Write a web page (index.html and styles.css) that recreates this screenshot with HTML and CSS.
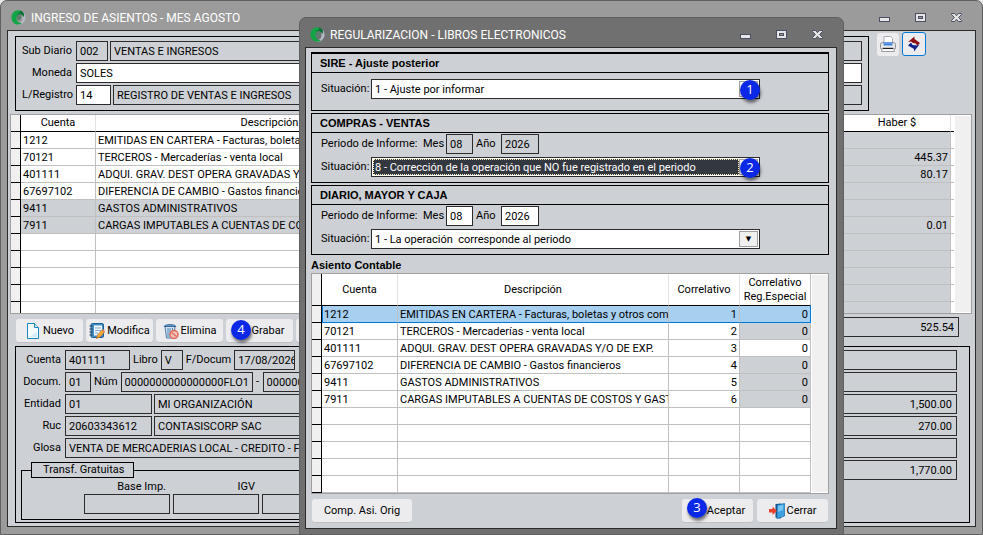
FILE: index.html
```html
<!DOCTYPE html>
<html lang="es">
<head>
  <meta charset="UTF-8" />
  <meta name="viewport" content="width=device-width, initial-scale=1.0" />
  <title>Ingreso de Asientos</title>
  <link rel="stylesheet" href="styles.css">
</head>
<body>
  <svg class="sprite" aria-hidden="true">
    <symbol id="logo" viewBox="0 0 16 16">
      <path d="M14 3.500A8 8 0 0 1 12.500 14.500C10 16.500 7 15.500 6 14C9.500 14.500 13 12 12 7.500Z" fill="#b4b8c4" />
      <path d="M9.500 0.500C4 -0.500 0.500 3.500 0.500 8C0.500 12.500 4 16 8.500 15.500C10 15.300 11 14.500 11.500 14C8 14 5.500 11.500 6 8C6.300 5.500 8.500 4 10.500 4.500C12 4.900 13 6 13.500 7.500C14.500 4.500 13 1.300 9.500 0.500Z" fill="#12a546" />
      <path d="M9.500 0.500C13 1.300 14.500 4.500 13.500 7.500C13 6 12 4.900 10.500 4.500C8.500 4 7 5 6.300 6.500C6.500 4.500 8 3 10 3Z" fill="#0b6b35" />
      <path d="M6.300 6.500C7 5 8.500 4.200 10.500 4.500C11.500 6.500 11.500 9.500 8.500 11.500C6.500 11 5.800 8.500 6.300 6.500Z" fill="#5d7d6c" />
    </symbol>
    <symbol id="minimize" viewBox="0 0 12 12">
      <rect x="0.500" y="5.500" width="10" height="4" fill="#e6e6e6" stroke="#4b4f66" />
    </symbol>
    <symbol id="maximize" viewBox="0 0 12 12">
      <rect x="0.500" y="1.500" width="10" height="8" fill="#e6e6e6" stroke="#4b4f66" />
      <rect x="3.500" y="4.500" width="4" height="2" fill="#9a9a9a" stroke="#4b4f66" />
    </symbol>
    <symbol id="close" viewBox="0 0 12 12">
      <path d="M0.500 1.500H3.500L5.500 3.700L7.500 1.500H10.500V2.500L7.600 5.500L10.500 8.500V9.500H7.500L5.500 7.300L3.500 9.500H0.500V8.500L3.400 5.500L0.500 2.500Z" fill="#e6e6e6" stroke="#4b4f66" />
    </symbol>
  </svg>

  <main class="window">
    <header class="titlebar">
      <svg class="logo"><use href="#logo" /></svg>
      <h1 class="title">INGRESO DE ASIENTOS - MES AGOSTO</h1>
      <button class="win-button" aria-label="Minimizar"><svg><use href="#minimize" /></svg></button>
      <button class="win-button" aria-label="Maximizar"><svg><use href="#maximize" /></svg></button>
      <button class="win-button" aria-label="Cerrar ventana"><svg><use href="#close" /></svg></button>
    </header>

    <div class="client entry">
      <div class="entry-top">
        <section class="box diary">
          <div class="field-row">
            <label class="label" for="subDiario">Sub Diario</label>
            <input class="field w-32" id="subDiario" value="002" readonly>
            <input class="field grow" value="VENTAS E INGRESOS" aria-label="Nombre del sub diario" readonly>
          </div>
          <div class="field-row">
            <label class="label" for="moneda">Moneda</label>
            <input class="field grow editable" id="moneda" value="SOLES">
          </div>
          <div class="field-row">
            <label class="label" for="registro">L/Registro</label>
            <input class="field w-35 editable" id="registro" value="14">
            <input class="field grow" value="REGISTRO DE VENTAS E INGRESOS" aria-label="Nombre del registro" readonly>
          </div>
        </section>
        <div class="tools">
          <button class="tool" aria-label="Imprimir">
            <svg viewBox="0 0 18 18">
              <path d="M5 8V1.500H11.500L13.500 3.500V8" fill="#fff" stroke="#aab" />
              <rect x="1.500" y="7.500" width="15" height="7" rx="2" fill="#e8e9eb" stroke="#8b8d92" />
              <path d="M4.500 7H13.500V10.500H4.500Z" fill="#3f7ed8" />
              <path d="M5 8H13" stroke="#8bb8f4" />
              <path d="M3.500 13H14.500L15.500 16.500H2.500Z" fill="#fafafa" stroke="#9a9ca0" />
              <path d="M4 13.500H14" stroke="#222" />
            </svg>
          </button>
          <button class="tool active" aria-label="Regularizar">
            <svg viewBox="0 0 18 18">
              <path d="M3 7L9.500 1.500V4L15 8L12 11L11 8.500L8 8L6 6.500Z" fill="#8c0d12" />
              <path d="M3 10.500L6 7.500L7.500 10L12 10.500L14.500 9.500L9 16.500V14Z" fill="#12208a" />
            </svg>
          </button>
        </div>
      </div>

      <div class="grid-frame entry-grid">
        <table class="grid">
          <colgroup>
            <col class="c-mark"><col class="c-account"><col class="c-wide"><col><col class="c-amount"><col class="c-rest">
          </colgroup>
          <thead>
            <tr><th class="mark"></th><th>Cuenta</th><th>Descripción</th><th></th><th>Haber $</th><th></th></tr>
          </thead>
          <tbody>
            <tr><td class="mark"></td><td>1212</td><td>EMITIDAS EN CARTERA - Facturas, boletas y otros comprobantes</td><td class="off"></td><td class="off num"></td><td></td></tr>
            <tr><td class="mark"></td><td>70121</td><td>TERCEROS - Mercaderías - venta local</td><td class="off"></td><td class="off num">445.37</td><td></td></tr>
            <tr><td class="mark"></td><td>401111</td><td>ADQUI. GRAV. DEST OPERA GRAVADAS Y/O DE EXP.</td><td class="off"></td><td class="off num">80.17</td><td></td></tr>
            <tr><td class="mark"></td><td>67697102</td><td>DIFERENCIA DE CAMBIO - Gastos financieros</td><td class="off"></td><td class="off num"></td><td></td></tr>
            <tr><td class="mark"></td><td class="off">9411</td><td class="off">GASTOS ADMINISTRATIVOS</td><td class="off"></td><td class="off num"></td><td></td></tr>
            <tr><td class="mark"></td><td class="off">7911</td><td class="off">CARGAS IMPUTABLES A CUENTAS DE COSTOS Y GASTOS</td><td class="off"></td><td class="off num">0.01</td><td></td></tr>
            <tr><td class="mark"></td><td></td><td></td><td class="off"></td><td class="off"></td><td></td></tr>
            <tr><td class="mark"></td><td></td><td></td><td class="off"></td><td class="off"></td><td></td></tr>
            <tr><td class="mark"></td><td></td><td></td><td class="off"></td><td class="off"></td><td></td></tr>
            <tr><td class="mark"></td><td></td><td></td><td class="off"></td><td class="off"></td><td></td></tr>
            <tr><td class="mark"></td><td></td><td></td><td class="off"></td><td class="off"></td><td></td></tr>
          </tbody>
        </table>
        <div class="scroll"></div>
      </div>

      <div class="actions">
        <button class="button w-67">
          <svg viewBox="0 0 16 16">
            <path d="M2.500 0.500H9.500L13.500 4.500V15.500H2.500Z" fill="#f4fbff" stroke="#1e86c0" />
            <path d="M9.500 0.500V4.500H13.500" fill="#bfe3f8" stroke="#1e86c0" />
            <path d="M4 14H12V9Z" fill="#d6eefb" />
          </svg>
          Nuevo
        </button>
        <button class="button w-67">
          <svg viewBox="0 0 16 16">
            <rect x="2" y="0.500" width="12.500" height="14" rx="1.500" fill="#3f8fc9" stroke="#1f5f96" />
            <rect x="5" y="2.500" width="8" height="10" fill="#f2f8fd" />
            <path d="M6 5H12M6 7.500H12M6 10H9" stroke="#7aa7cf" />
            <path d="M0.500 3H4M0.500 6H4M0.500 9H4M0.500 12H4" stroke="#33465c" />
            <path d="M7.500 15.500L8.500 12L13 7L15.500 9L11 14Z" fill="#f5ac3c" stroke="#b8651b" stroke-width="0.700" />
            <path d="M13 7L14 6L16 8L15.500 9Z" fill="#e2867a" />
          </svg>
          Modifica
        </button>
        <button class="button w-67">
          <svg viewBox="0 0 16 16">
            <path d="M2 3.500H12L11 15H3.500Z" fill="#d4e2ef" stroke="#4f7ca7" />
            <path d="M5 5V14M7 5V14M9.500 5V10" stroke="#4f86ba" />
            <path d="M1 3.500C2 1 12 1 13 3.500Z" fill="#70a7d8" stroke="#36699b" />
            <circle cx="11" cy="11.500" r="4" fill="#f3c2bb" stroke="#dc6a5c" stroke-width="1.500" />
            <path d="M8.500 9.500L13.500 13.500" stroke="#dc6a5c" stroke-width="1.500" />
          </svg>
          Elimina
        </button>
        <button class="button w-67 save">Grabar<span class="badge on-save">4</span></button>
        <button class="button w-67" aria-label="Cancelar"></button>
        <input class="field num total" value="525.54" aria-label="Total haber" readonly>
      </div>

      <section class="box detail">
        <div class="detail-left">
          <div class="field-row">
            <label class="label" for="cuenta">Cuenta</label>
            <input class="field w-65" id="cuenta" value="401111" readonly>
            <label class="inline" for="libro">Libro</label>
            <input class="field w-22" id="libro" value="V" readonly>
            <label class="inline" for="fdocum">F/Docum</label>
            <input class="field w-61" id="fdocum" value="17/08/2026" readonly>
          </div>
          <div class="field-row">
            <label class="label" for="docum">Docum.</label>
            <input class="field w-26" id="docum" value="01" readonly>
            <label class="inline" for="numero">Núm</label>
            <input class="field w-132" id="numero" value="0000000000000000FLO1" readonly>
            <span class="dash">-</span>
            <input class="field grow" value="0000000001" aria-label="Número final" readonly>
          </div>
          <div class="field-row">
            <label class="label" for="entidad">Entidad</label>
            <input class="field w-87" id="entidad" value="01" readonly>
            <input class="field grow" value="MI ORGANIZACIÓN" aria-label="Nombre de entidad" readonly>
          </div>
          <div class="field-row">
            <label class="label" for="ruc">Ruc</label>
            <input class="field w-87" id="ruc" value="20603343612" readonly>
            <input class="field grow" value="CONTASISCORP SAC" aria-label="Razón social" readonly>
          </div>
          <div class="field-row">
            <label class="label" for="glosa">Glosa</label>
            <input class="field grow" id="glosa" value="VENTA DE MERCADERIAS LOCAL - CREDITO - FLO1" readonly>
          </div>
          <fieldset class="free">
            <legend>Transf. Gratuitas</legend>
            <div class="free-item">
              <label for="base">Base Imp.</label>
              <input class="field" id="base" readonly>
            </div>
            <div class="free-item">
              <label for="igv">IGV</label>
              <input class="field" id="igv" readonly>
            </div>
            <div class="free-item">
              <label for="total">Total</label>
              <input class="field" id="total" readonly>
            </div>
          </fieldset>
        </div>
        <div class="detail-right">
          <input class="field num" aria-label="Importe 1" readonly>
          <input class="field num" aria-label="Importe 2" readonly>
          <input class="field num" value="1,500.00" aria-label="Importe 3" readonly>
          <input class="field num" value="270.00" aria-label="Importe 4" readonly>
          <input class="field num" aria-label="Importe 5" readonly>
          <input class="field num" value="1,770.00" aria-label="Importe 6" readonly>
        </div>
      </section>
    </div>
  </main>

  <div class="dialog" role="dialog" aria-labelledby="dialogTitle">
    <header class="titlebar">
      <svg class="logo"><use href="#logo" /></svg>
      <h2 class="title" id="dialogTitle">REGULARIZACION - LIBROS ELECTRONICOS</h2>
      <button class="win-button" aria-label="Minimizar"><svg><use href="#minimize" /></svg></button>
      <button class="win-button" aria-label="Maximizar"><svg><use href="#maximize" /></svg></button>
      <button class="win-button" aria-label="Cerrar ventana"><svg><use href="#close" /></svg></button>
    </header>

    <div class="client book">
      <section class="panel sire">
        <h3 class="panel-title">SIRE - Ajuste posterior</h3>
        <div class="panel-row">
          <label class="situation" for="situacionSire">Situación:</label>
          <div class="combo">
            <select id="situacionSire"><option>1 - Ajuste por informar</option></select>
            <span class="badge on-combo">1</span>
          </div>
        </div>
      </section>

      <section class="panel">
        <h3 class="panel-title">COMPRAS - VENTAS</h3>
        <div class="panel-row">
          <span class="period">Periodo de Informe:</span>
          <label class="w-20" for="mesCompras">Mes</label>
          <input class="field w-27" id="mesCompras" value="08" readonly>
          <label class="w-22" for="anioCompras">Año</label>
          <input class="field w-38" id="anioCompras" value="2026" readonly>
        </div>
        <div class="panel-row">
          <label class="situation" for="situacionCompras">Situación:</label>
          <div class="combo focused">
            <select id="situacionCompras"><option>8 - Corrección de la operación que NO fue registrado en el periodo</option></select>
            <span class="badge on-combo">2</span>
          </div>
        </div>
      </section>

      <section class="panel">
        <h3 class="panel-title">DIARIO, MAYOR Y CAJA</h3>
        <div class="panel-row">
          <span class="period">Periodo de Informe:</span>
          <label class="w-20" for="mesDiario">Mes</label>
          <input class="field w-27 editable" id="mesDiario" value="08">
          <label class="w-22" for="anioDiario">Año</label>
          <input class="field w-38 editable" id="anioDiario" value="2026">
        </div>
        <div class="panel-row">
          <label class="situation" for="situacionDiario">Situación:</label>
          <div class="combo">
            <select id="situacionDiario"><option>1 - La operación&nbsp; corresponde al periodo</option></select>
          </div>
        </div>
      </section>

      <h3 class="grid-title">Asiento Contable</h3>
      <div class="grid-frame book-grid">
        <table class="grid">
          <colgroup>
            <col class="c-mark"><col class="c-code"><col><col class="c-corr"><col class="c-corr">
          </colgroup>
          <thead>
            <tr><th class="mark"></th><th>Cuenta</th><th>Descripción</th><th>Correlativo</th><th>Correlativo<br>Reg.Especial</th></tr>
          </thead>
          <tbody>
            <tr class="selected"><td class="mark"></td><td>1212</td><td>EMITIDAS EN CARTERA - Facturas, boletas y otros comprobantes</td><td class="num">1</td><td class="num">0</td></tr>
            <tr><td class="mark"></td><td>70121</td><td>TERCEROS - Mercaderías - venta local</td><td class="num">2</td><td class="num off">0</td></tr>
            <tr><td class="mark"></td><td>401111</td><td>ADQUI. GRAV. DEST OPERA GRAVADAS Y/O DE EXP.</td><td class="num">3</td><td class="num">0</td></tr>
            <tr><td class="mark"></td><td>67697102</td><td>DIFERENCIA DE CAMBIO - Gastos financieros</td><td class="num">4</td><td class="num off">0</td></tr>
            <tr><td class="mark"></td><td>9411</td><td>GASTOS ADMINISTRATIVOS</td><td class="num">5</td><td class="num off">0</td></tr>
            <tr><td class="mark"></td><td>7911</td><td>CARGAS IMPUTABLES A CUENTAS DE COSTOS Y GASTOS</td><td class="num">6</td><td class="num off">0</td></tr>
            <tr><td class="mark"></td><td></td><td></td><td></td><td></td></tr>
            <tr><td class="mark"></td><td></td><td></td><td></td><td></td></tr>
            <tr><td class="mark"></td><td></td><td></td><td></td><td></td></tr>
            <tr><td class="mark"></td><td></td><td></td><td></td><td></td></tr>
            <tr><td class="mark"></td><td></td><td></td><td></td><td></td></tr>
          </tbody>
        </table>
        <div class="scroll"></div>
      </div>

      <footer class="dialog-actions">
        <button class="button original">Comp. Asi. Orig</button>
        <button class="button w-71 accept">Aceptar<span class="badge on-accept">3</span></button>
        <button class="button w-71">
          <svg viewBox="0 0 16 16">
            <path d="M6.500 1L12 0.500V15.500L6.500 14.500Z" fill="#154e80" />
            <path d="M8 2L15.500 0.500V13L8 15.800Z" fill="#3ba0e0" stroke="#176aa8" stroke-width="0.700" />
            <path d="M9 3L14 2V7L9 9Z" fill="#79c6f4" />
            <path d="M0 6H3.500V3.500L8 8L3.500 12V9.500H0Z" fill="#e8402c" />
          </svg>
          Cerrar
        </button>
      </footer>
    </div>
  </div>
</body>
</html>
```

FILE: styles.css
```css
* {
  box-sizing: border-box;
}

body {
  margin: 0;
  min-height: 100vh;
  position: relative;
  overflow: hidden;
  background: #e8e8e8;
  color: #000;
  font: 11px/14px Roboto, "Liberation Sans", Arial, sans-serif;
}

input,
select,
button {
  font: inherit;
  color: inherit;
  margin: 0;
}

.sprite {
  position: absolute;
  width: 0;
  height: 0;
}

/* windows */

.window,
.dialog {
  display: flex;
  flex-direction: column;
  border: 1px solid #5f5f5f;
  border-radius: 7px 7px 0 0;
}

.window {
  min-height: 100vh;
  padding: 0 6px 7px;
  background: #9b9b9b;
}

.dialog {
  position: absolute;
  top: 17px;
  left: 299px;
  right: 139px;
  bottom: 0;
  padding: 0 6px 5px 5px;
  background: #707070;
}

.titlebar {
  display: flex;
  align-items: center;
  height: 29px;
  padding: 4px 1px 0 4px;
}

.dialog .titlebar {
  padding-left: 5px;
}

.logo {
  width: 15px;
  height: 15px;
}

.title {
  flex: 1;
  margin: 0 0 0 5px;
  color: #fff;
  font: 12px/16px Roboto, "Open Sans", sans-serif;
  white-space: nowrap;
}

.win-button {
  width: 36px;
  height: 18px;
  padding: 0;
  border: 0;
  background: none;
  display: flex;
  align-items: center;
  justify-content: center;
}

.win-button svg {
  width: 12px;
  height: 12px;
}

.client {
  flex: 1;
  display: flex;
  flex-direction: column;
  border: 1px solid #2b2b2b;
  background: #cdd0d5;
}

/* fields */

.box {
  border: 1px solid #000;
}

.field {
  height: 20px;
  min-width: 0;
  padding: 0 0 0 3px;
  border: 1px solid #2b2b2b;
  border-radius: 0;
  background: #cdd0d5;
}

.field.editable {
  background: #fff;
}

.field.num {
  padding-right: 4px;
}

.field-row {
  display: flex;
  align-items: center;
  gap: 2px;
}

.grow {
  flex: 1;
}

.label {
  flex: none;
  margin-right: 2px;
  text-align: right;
  white-space: nowrap;
}

.num {
  text-align: right;
}

.w-20 { width: 20px; }
.w-22 { width: 22px; }
.w-26 { width: 26px; }
.w-27 { width: 27px; }
.w-32 { width: 32px; }
.w-35 { width: 35px; }
.w-38 { width: 38px; }
.w-61 { width: 61px; }
.w-65 { width: 65px; }
.w-67 { width: 67px; }
.w-71 { width: 71px; }
.w-87 { width: 87px; }
.w-132 { width: 132px; }

/* main window */

.entry {
  padding: 1px 3px 3px 2px;
}

.entry-top {
  display: flex;
  margin: 4px 46px 3px 5px;
  gap: 8px;
}

.diary {
  flex: 1;
  display: flex;
  flex-direction: column;
  gap: 2px;
  padding: 4px 6px 5px;
}

.diary .label {
  width: 50px;
}

.tools {
  display: flex;
  align-items: center;
  align-self: flex-start;
  gap: 3px;
  margin-top: -4px;
}

.tool {
  width: 22px;
  height: 23px;
  padding: 0;
  border: 0;
  border-radius: 3px;
  background: #ececee;
  display: flex;
  align-items: center;
  justify-content: center;
}

.tool.active {
  width: 24px;
  height: 24px;
  border: 1px solid #0078d7;
}

.tool svg {
  width: 18px;
  height: 18px;
}

/* data grids */

.grid-frame {
  display: flex;
  overflow: hidden;
  border: 1px solid #a0a0a0;
  background: #fff;
}

.entry-grid {
  height: 200px;
}

.grid {
  flex: 1;
  width: 0;
  align-self: flex-start;
  table-layout: fixed;
  border-collapse: separate;
  border-spacing: 0;
}

.grid th {
  height: 17px;
  padding: 0;
  border-right: 1px solid #e2e2e2;
  border-bottom: 1px solid #000;
  font-weight: normal;
}

.grid td {
  height: 17px;
  padding: 2px 2px 0;
  border-right: 1px solid #c0c0c0;
  border-bottom: 1px solid #c0c0c0;
  overflow: hidden;
  white-space: nowrap;
}

.grid .mark {
  border-right-color: #000;
  border-bottom-color: #000;
  background: #f0f0f0;
}

.grid td.off {
  background: #cdd0d5;
}

.grid tr > :last-child {
  border-right-color: #c0c0c0;
}

.entry-grid tr > :last-child {
  border-right: 0;
}

.c-mark { width: 10px; }
.c-account { width: 75px; }
.c-wide { width: 348px; }
.c-amount { width: 107px; }
.c-rest { width: 3px; }
.c-code { width: 76px; }
.c-corr { width: 71px; }

.entry-grid td:last-child {
  padding: 0;
}

.scroll {
  width: 16px;
  margin: 1px 0 1px 1px;
  background: #f0f0f0;
}

/* buttons */

.button {
  position: relative;
  display: flex;
  align-items: center;
  justify-content: center;
  gap: 2px;
  height: 23px;
  padding: 0;
  border: 0;
  border-radius: 3px;
  background: #ececee;
  box-shadow: 0 1px 0 #bfc1c5;
  white-space: nowrap;
}

.button svg {
  width: 16px;
  height: 16px;
}

.actions {
  display: flex;
  align-items: flex-end;
  gap: 3px;
  margin: 5px 13px 4px 6px;
}

.total {
  width: 120px;
  margin: -2px 0 0 auto;
  align-self: flex-start;
}

.save {
  padding-left: 17px;
}

/* document detail */

.detail {
  flex: 1;
  display: flex;
  gap: 20px;
  margin-left: 5px;
  margin-right: 2px;
  padding: 3px 12px 2px 5px;
}

.detail-left {
  flex: 1;
  display: flex;
  flex-direction: column;
  gap: 2px;
}

.detail-right {
  width: 160px;
  display: flex;
  flex-direction: column;
  gap: 2px;
}

.detail .label {
  width: 40px;
}

.inline {
  padding: 0 1px;
}

.dash {
  width: 6px;
  text-align: center;
}

.free {
  flex: 1;
  display: flex;
  align-items: flex-start;
  gap: 3px;
  min-width: 0;
  margin: 2px 0 0;
  padding: 2px 0 0 62px;
  border: 1px solid #000;
}

.free legend {
  margin-left: -53px;
  padding: 0 9px 0 11px;
  border: 1px solid #000;
}

.free-item {
  display: flex;
  flex-direction: column;
  width: 86px;
}

.free-item label {
  padding-right: 4px;
  text-align: right;
}

/* dialog */

.book {
  padding: 4px 7px 6px 5px;
}

.panel {
  display: flex;
  flex-direction: column;
  gap: 3px;
  margin-bottom: 2px;
  padding-bottom: 5px;
  border: 1px solid #000;
}

.panel.sire {
  border-top-width: 2px;
  padding-bottom: 11px;
}

.panel-title,
.grid-title {
  margin: 0;
  font: bold 11px/14px "Liberation Sans", Arial, sans-serif;
}

.panel-title {
  margin-bottom: -2px;
  padding: 2px 8px;
  border-bottom: 1px solid #000;
}

.sire .panel-title {
  margin-bottom: 3px;
}

.panel-row {
  display: flex;
  align-items: center;
  gap: 3px;
  padding-left: 9px;
}

.situation {
  width: 47px;
}

.period {
  width: 99px;
}

.combo {
  position: relative;
  display: flex;
  width: 389px;
  height: 20px;
  padding: 1px;
  border: 1px solid #2b2b2b;
  background: #fff;
}

.combo select {
  flex: 1;
  min-width: 0;
  padding: 2px 2px 0;
  border: 0;
  border-radius: 0;
  background: transparent;
  appearance: none;
}

.combo::after {
  content: "▼";
  width: 17px;
  border: 1px solid #a0a0a0;
  background: #f0f0f0;
  font: 7px/14px "DejaVu Sans", sans-serif;
  text-align: center;
}

.combo.focused select {
  padding: 1px 1px 0;
  border: 1px dotted #fbf3c0;
  background: #333740;
  color: #fff;
}

.grid-title {
  padding: 1px 0;
}

.book-grid {
  flex: 1;
}

.book-grid th {
  height: 32px;
}

.selected td:not(.mark) {
  border-bottom-color: #0078d7;
  background: #a6cff0;
}

.selected td:nth-child(2) {
  border-left: 1px solid #0078d7;
  padding-left: 1px;
}

.grid .selected td:last-child {
  border-right-color: #0078d7;
}

.dialog-actions {
  display: flex;
  gap: 4px;
  margin-top: 5px;
  padding: 0 1px;
}

.original {
  width: 100px;
  margin-right: auto;
}

.accept {
  padding-left: 17px;
}

/* step numbers */

.badge {
  position: absolute;
  z-index: 1;
  width: 20px;
  height: 20px;
  border-radius: 50%;
  background: #0a28e6;
  box-shadow: 1px 3px 3px rgba(0, 0, 0, 0.5);
  color: #fff;
  font: 13px/19px "Open Sans", "Noto Sans", sans-serif;
  text-align: center;
}

.on-combo {
  top: 0;
  right: -1px;
}

.on-save {
  top: 1px;
  left: 5px;
}

.on-accept {
  top: -1px;
  left: 5px;
}
```
